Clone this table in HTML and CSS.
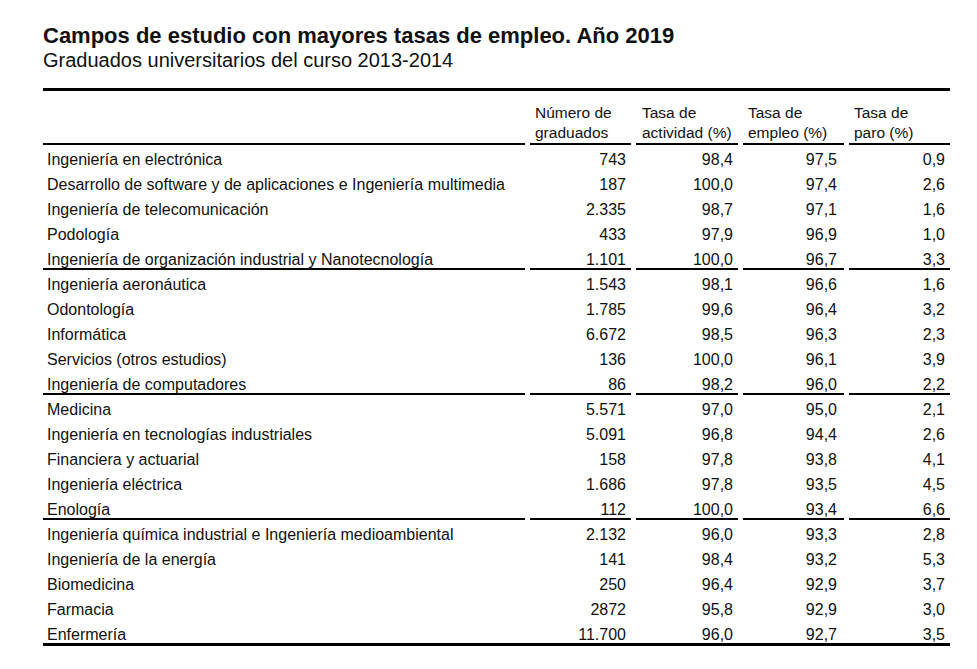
FILE: index.html
```html
<!DOCTYPE html>
<html lang="es">
<head>
<meta charset="UTF-8">
<meta name="viewport" content="width=device-width, initial-scale=1.0">
<title>Campos de estudio con mayores tasas de empleo</title>
<link rel="stylesheet" href="styles.css">
</head>
<body>

<div class="page">
    <h1 class="title">Campos de estudio con mayores tasas de empleo. Año 2019</h1>
    <p class="subtitle">Graduados universitarios del curso 2013-2014</p>

    <div class="table-wrap">
        <table class="stats">
            <thead>
                <tr>
                    <th class="field"></th>
                    <th class="num">Número de<br>graduados</th>
                    <th class="act">Tasa de<br>actividad (%)</th>
                    <th class="emp">Tasa de<br>empleo (%)</th>
                    <th class="par">Tasa de<br>paro (%)</th>
                </tr>
            </thead>
            <tbody>
                <tr><td class="field">Ingeniería en electrónica</td><td class="num">743</td><td class="act">98,4</td><td class="emp">97,5</td><td class="par">0,9</td></tr>
                <tr><td class="field">Desarrollo de software y de aplicaciones e Ingeniería multimedia</td><td class="num">187</td><td class="act">100,0</td><td class="emp">97,4</td><td class="par">2,6</td></tr>
                <tr><td class="field">Ingeniería de telecomunicación</td><td class="num">2.335</td><td class="act">98,7</td><td class="emp">97,1</td><td class="par">1,6</td></tr>
                <tr><td class="field">Podología</td><td class="num">433</td><td class="act">97,9</td><td class="emp">96,9</td><td class="par">1,0</td></tr>
                <tr class="group-end"><td class="field">Ingeniería de organización industrial y Nanotecnología</td><td class="num">1.101</td><td class="act">100,0</td><td class="emp">96,7</td><td class="par">3,3</td></tr>

                <tr><td class="field">Ingeniería aeronáutica</td><td class="num">1.543</td><td class="act">98,1</td><td class="emp">96,6</td><td class="par">1,6</td></tr>
                <tr><td class="field">Odontología</td><td class="num">1.785</td><td class="act">99,6</td><td class="emp">96,4</td><td class="par">3,2</td></tr>
                <tr><td class="field">Informática</td><td class="num">6.672</td><td class="act">98,5</td><td class="emp">96,3</td><td class="par">2,3</td></tr>
                <tr><td class="field">Servicios (otros estudios)</td><td class="num">136</td><td class="act">100,0</td><td class="emp">96,1</td><td class="par">3,9</td></tr>
                <tr class="group-end"><td class="field">Ingeniería de computadores</td><td class="num">86</td><td class="act">98,2</td><td class="emp">96,0</td><td class="par">2,2</td></tr>

                <tr><td class="field">Medicina</td><td class="num">5.571</td><td class="act">97,0</td><td class="emp">95,0</td><td class="par">2,1</td></tr>
                <tr><td class="field">Ingeniería en tecnologías industriales</td><td class="num">5.091</td><td class="act">96,8</td><td class="emp">94,4</td><td class="par">2,6</td></tr>
                <tr><td class="field">Financiera y actuarial</td><td class="num">158</td><td class="act">97,8</td><td class="emp">93,8</td><td class="par">4,1</td></tr>
                <tr><td class="field">Ingeniería eléctrica</td><td class="num">1.686</td><td class="act">97,8</td><td class="emp">93,5</td><td class="par">4,5</td></tr>
                <tr class="group-end"><td class="field">Enología</td><td class="num">112</td><td class="act">100,0</td><td class="emp">93,4</td><td class="par">6,6</td></tr>

                <tr><td class="field">Ingeniería química industrial e Ingeniería medioambiental</td><td class="num">2.132</td><td class="act">96,0</td><td class="emp">93,3</td><td class="par">2,8</td></tr>
                <tr><td class="field">Ingeniería de la energía</td><td class="num">141</td><td class="act">98,4</td><td class="emp">93,2</td><td class="par">5,3</td></tr>
                <tr><td class="field">Biomedicina</td><td class="num">250</td><td class="act">96,4</td><td class="emp">92,9</td><td class="par">3,7</td></tr>
                <tr><td class="field">Farmacia</td><td class="num">2872</td><td class="act">95,8</td><td class="emp">92,9</td><td class="par">3,0</td></tr>
                <tr class="last"><td class="field">Enfermería</td><td class="num">11.700</td><td class="act">96,0</td><td class="emp">92,7</td><td class="par">3,5</td></tr>
            </tbody>
        </table>
    </div>
</div>

</body>
</html>
```

FILE: styles.css
```css
/* Basic Reset */
* {
    margin: 0;
    padding: 0;
    box-sizing: border-box;
}

body {
    background: #fff;
    font-family: "Liberation Sans", Arial, sans-serif;
    color: #111;
}

/* Page */
.page {
    padding: 23px 0 0 43px;
}

.title {
    font-size: 22px;
    line-height: 26px;
    font-weight: bold;
}

.subtitle {
    font-size: 20px;
    line-height: 22px;
}

/* Table frame: thick rules above and below */
.table-wrap {
    width: 907px;
    margin-top: 17px;
    border-top: 3px solid #000;
    border-bottom: 3px solid #000;
}

.stats {
    width: 917px;
    margin-left: -5px;
    border-collapse: separate;
    border-spacing: 5px 0; /* gaps between the column rules */
    table-layout: fixed;
    font-size: 16px;
}

.stats .field { width: 482px; }
.stats .num   { width: 101px; }
.stats .act   { width: 102px; }
.stats .emp   { width: 101px; }
.stats .par   { width: 101px; }

/* Header */
.stats th {
    font-weight: normal;
    font-size: 15.5px;
    text-align: left;
    vertical-align: bottom;
    white-space: nowrap;
    line-height: 20px;
    padding: 12px 0 0 5px;
    border-bottom: 2px solid #000;
}

.stats th.act {
    padding-left: 6px;
}

/* Body rows */
.stats td {
    line-height: 17px;
    padding: 6px 5px 2px 5px;
    text-align: right;
    white-space: nowrap;
}

.stats td.field {
    text-align: left;
    padding-left: 4px;
}

.stats td.emp {
    padding-right: 7px;
}

.stats tr.group-end td {
    padding-bottom: 0;
    border-bottom: 2px solid #000;
}

.stats tr.last td {
    padding-bottom: 0;
}
```
